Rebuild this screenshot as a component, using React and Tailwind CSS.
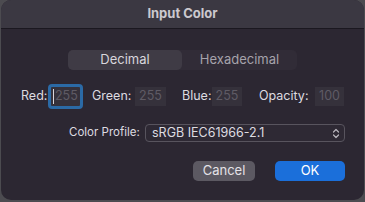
import React from 'react';

const font = { fontFamily: 'Inter, "Noto Sans", "Liberation Sans", sans-serif' };

const Field = ({ value, focused, w }) =>
  focused ? (
    <div className="w-[35px] h-[25px] rounded-[4px] border-[3px] border-[#2b6aa6] bg-[#35313b] flex items-center pl-[2px]">
      <div className="w-px h-[15px] bg-[#d8d6dc]" />
      <span className="text-[12.5px] text-[#5f5b65] leading-none ml-px">{value}</span>
    </div>
  ) : (
    <div className={`${w} h-[19px] bg-[#35313b] flex items-center justify-center`}>
      <span className="text-[12.5px] text-[#5f5b65] leading-none">{value}</span>
    </div>
  );

export default function App() {
  return (
    <div className="w-[365px] h-[202px] bg-[#4c4b50] px-px overflow-hidden" style={font}>
      <div className="h-[200px] rounded-[10px] bg-[#2c2732] overflow-hidden flex flex-col">
        <div className="h-[29px] shrink-0 bg-[#3b3842] border-b border-[#1b1820] flex items-center justify-center">
          <span className="text-[13px] font-bold text-[#cbc9cf]">Input Color</span>
        </div>

        <div className="pt-[21px]">
          <div className="ml-[67px] w-[229px] h-[20px] flex rounded-[5px] bg-[#312c37]">
            <div className="w-[114px] rounded-[5px] bg-[#3f3b45] flex items-center justify-center text-[13px] text-[#d8d6dc]">
              Decimal
            </div>
            <div className="flex-1 flex items-center justify-center text-[13px] text-[#a6a3ab]">
              Hexadecimal
            </div>
          </div>

          <div className="mt-[14px] pl-[20px] flex items-center text-[12.5px] text-[#dddbe0] whitespace-nowrap">
            <span className="w-[27px]">Red:</span>
            <Field value="255" focused />
            <span className="ml-[9px] w-[43px]">Green:</span>
            <Field value="255" w="w-[31px]" />
            <span className="ml-[16px] w-[30px]">Blue:</span>
            <Field value="255" w="w-[30px]" />
            <span className="ml-[17px] w-[56px]">Opacity:</span>
            <Field value="100" w="w-[29px]" />
          </div>

          <div className="mt-[15px] flex items-center">
            <span className="ml-[68px] w-[76px] whitespace-nowrap text-[11.5px] text-[#dddbe0]">Color Profile:</span>
            <div className="w-[200px] h-[18px] rounded-[4px] border border-[#58545e] bg-[#2e2934] flex items-center justify-between pl-[6px] pr-[4px]">
              <span className="text-[12.5px] text-[#dddbe0] leading-none">sRGB IEC61966-2.1</span>
              <svg width="8" height="11" viewBox="0 0 8 11" fill="none" stroke="#b9b6bd" strokeWidth="1.2" strokeLinecap="round" strokeLinejoin="round">
                <path d="M1.5 4 L4 1.5 L6.5 4" />
                <path d="M1.5 7 L4 9.5 L6.5 7" />
              </svg>
            </div>
          </div>

          <div className="mt-[19px] flex justify-end pr-[19px] gap-[20px]">
            <button className="w-[62px] h-[20px] rounded-[5px] bg-[#5c5962] text-[13px] text-[#e4e2e7] flex items-center justify-center">
              Cancel
            </button>
            <button className="w-[70px] h-[20px] rounded-[5px] bg-[#1b6fda] text-[13px] text-white flex items-center justify-center">
              OK
            </button>
          </div>
        </div>
      </div>
    </div>
  );
}
